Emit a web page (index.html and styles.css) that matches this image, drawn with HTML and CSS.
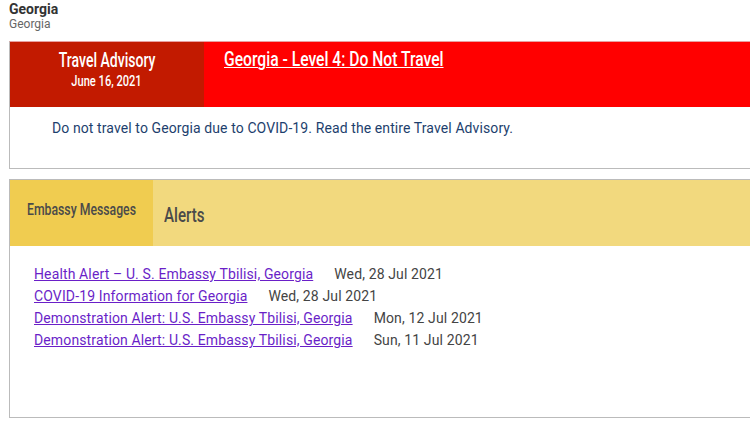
FILE: index.html
```html
<!DOCTYPE html>
<html>
  <head>
    <meta name="viewport" content="width=device-width, initial-scale=1.0">
    <title>Georgia</title>
    <link rel="stylesheet" href="styles.css">
  </head>

  <body>
    <div class="country-title">
      <h1>Georgia</h1>
      <div class="country-sub">Georgia</div>
    </div>

    <!-- Travel advisory box -->
    <div class="panel advisory">
      <div class="advisory-head">
        <div class="advisory-label">
          <div class="label-title"><span class="narrow">Travel Advisory</span></div>
          <div class="label-date"><span class="narrow">June 16, 2021</span></div>
        </div>
        <div class="advisory-level">
          <a href="#" class="narrow left">Georgia - Level 4: Do Not Travel</a>
        </div>
      </div>
      <div class="advisory-body">
        Do not travel to Georgia due to COVID-19. Read the entire Travel Advisory.
      </div>
    </div>

    <!-- Embassy messages box -->
    <div class="panel messages">
      <div class="messages-head">
        <div class="messages-tab"><span class="narrow left">Embassy Messages</span></div>
        <div class="messages-title"><span class="narrow left">Alerts</span></div>
      </div>
      <ul class="alert-list">
        <li><a href="#">Health Alert – U. S. Embassy Tbilisi, Georgia</a><span class="date">Wed, 28 Jul 2021</span></li>
        <li><a href="#">COVID-19 Information for Georgia</a><span class="date">Wed, 28 Jul 2021</span></li>
        <li><a href="#">Demonstration Alert: U.S. Embassy Tbilisi, Georgia</a><span class="date">Mon, 12 Jul 2021</span></li>
        <li><a href="#">Demonstration Alert: U.S. Embassy Tbilisi, Georgia</a><span class="date">Sun, 11 Jul 2021</span></li>
      </ul>
    </div>
  </body>
</html>
```

FILE: styles.css
```css
  body {
    margin: 0;
    padding: 0 0 0 9px;
    font-family: 'Roboto', sans-serif;
    background-color: #fff;
    overflow: hidden;
  }

  /* Condensed heading look */
  .narrow {
    display: inline-block;
    white-space: nowrap;
    transform: scaleX(0.72);
    transform-origin: center;
  }

  .narrow.left {
    transform-origin: left;
  }

  /* Page title */
  .country-title {
    padding-top: 1px;
  }

  .country-title h1 {
    margin: 0;
    font-size: 14px;
    line-height: 16px;
    font-weight: bold;
    color: #333;
  }

  .country-sub {
    font-size: 12px;
    line-height: 14px;
    color: #666;
  }

  /* Shared box */
  .panel {
    width: 760px;
    border: 1px solid #bbb;
    border-right: none;
  }

  /* Travel advisory */
  .advisory {
    margin-top: 10px;
    height: 126px;
    border-top-color: #e8a0a0;
  }

  .advisory-head {
    display: flex;
    height: 65px;
  }

  .advisory-label {
    width: 194px;
    background-color: #c21a00;
    color: #fff;
    text-align: center;
    font-weight: 500;
    padding-top: 7px;
    box-sizing: border-box;
  }

  .label-title {
    font-size: 19.5px;
    line-height: 23px;
  }

  .label-date {
    font-size: 15px;
    line-height: 18px;
  }

  .label-date .narrow {
    transform: scaleX(0.74);
  }

  .advisory-level {
    flex: 1;
    background-color: #ff0000;
    padding: 4px 0 0 20px;
  }

  .advisory-level a {
    color: #fff;
    font-size: 21px;
    line-height: 26px;
    font-weight: 500;
    text-decoration-thickness: 1px;
    transform: scaleX(0.745);
  }

  .advisory-body {
    padding: 12px 0 0 42px;
    font-size: 14px;
    line-height: 18px;
    letter-spacing: 0.1px;
    color: #1d3f6e;
  }

  /* Embassy messages */
  .messages {
    margin-top: 10px;
    height: 237px;
  }

  .messages-head {
    display: flex;
    height: 66px;
    background-color: #f2d97e;
    color: #4a4a4a;
    font-weight: 500;
  }

  .messages-tab {
    width: 143px;
    background-color: #f0cc50;
    font-size: 17px;
    padding: 19px 0 0 17px;
    box-sizing: border-box;
  }

  .messages-title {
    font-size: 21px;
    padding: 23px 0 0 11px;
  }

  .alert-list {
    list-style: none;
    margin: 0;
    padding: 17px 0 0 24px;
  }

  .alert-list li {
    font-size: 14px;
    line-height: 22px;
    letter-spacing: 0.13px;
  }

  .alert-list a {
    color: #6a1fc8;
  }

  .alert-list .date {
    margin-left: 21px;
    color: #444;
  }
```
